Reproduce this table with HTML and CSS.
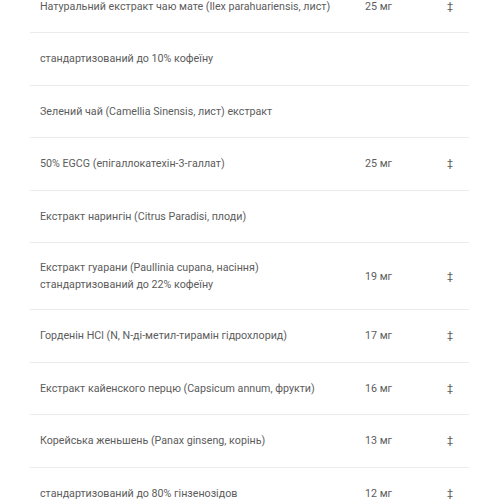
FILE: index.html
```html
<!DOCTYPE html>
<html lang="uk">
<head>
<meta charset="utf-8">
<link rel="stylesheet" href="styles.css">
</head>
<body>
<table class="facts">
  <colgroup>
    <col class="c-name">
    <col class="c-amount">
    <col class="c-dv">
  </colgroup>
  <tbody>
    <tr><td>Натуральний екстракт чаю мате (Ilex parahuariensis, лист)</td><td>25 мг</td><td>‡</td></tr>
    <tr><td>стандартизований до 10% кофеїну</td><td></td><td></td></tr>
    <tr><td>Зелений чай (Camellia Sinensis, лист) екстракт</td><td></td><td></td></tr>
    <tr><td>50% EGCG (епігаллокатехін-3-галлат)</td><td>25 мг</td><td>‡</td></tr>
    <tr><td>Екстракт нарингін (Citrus Paradisi, плоди)</td><td></td><td></td></tr>
    <tr><td>Екстракт гуарани (Paullinia cupana, насіння) стандартизований до 22% кофеїну</td><td>19 мг</td><td>‡</td></tr>
    <tr><td>Горденін HCl (N, N-ді-метил-тирамін гідрохлорид)</td><td>17 мг</td><td>‡</td></tr>
    <tr><td>Екстракт кайенского перцю (Capsicum annum, фрукти)</td><td>16 мг</td><td>‡</td></tr>
    <tr><td>Корейська женьшень (Panax ginseng, корінь)</td><td>13 мг</td><td>‡</td></tr>
    <tr><td>стандартизований до 80% гінзенозідов</td><td>12 мг</td><td>‡</td></tr>
  </tbody>
</table>
</body>
</html>
```
FILE: styles.css
```css
html, body {
  margin: 0;
  padding: 0;
  background: #ffffff;
}

body {
  font-family: "Roboto", "Noto Sans", sans-serif;
  font-size: 10.7px;
  color: #5c5c5c;
}

.facts {
  margin: -19.5px 0 0 30px;
  width: 439px;
  border-collapse: collapse;
  table-layout: fixed;
}

.c-name { width: 325px; }
.c-amount { width: 82px; }
.c-dv { width: 32px; }

.facts td {
  padding: 16px 10px;
  height: 19.5px;
  line-height: 17px;
  vertical-align: middle;
  text-align: left;
  border-bottom: 1px solid #ececec;
}
```
